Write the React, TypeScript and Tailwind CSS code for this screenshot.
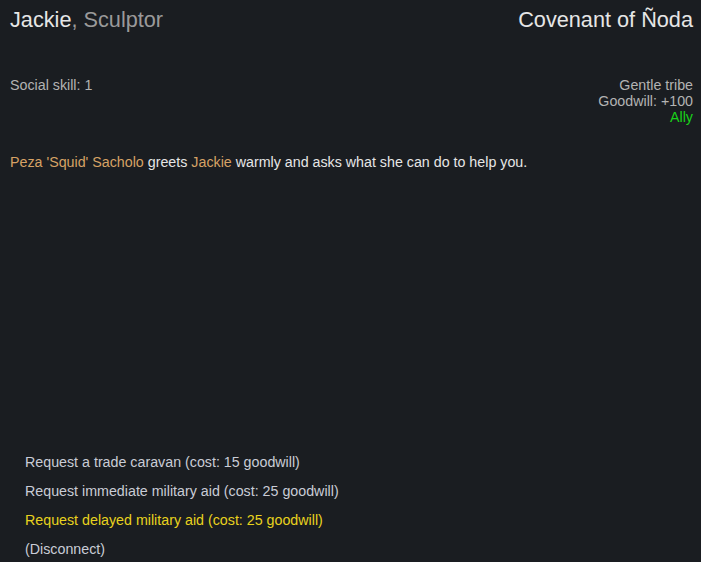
import React from "react";

export default function App() {
  const options = [
    { text: "Request a trade caravan (cost: 15 goodwill)", cls: "text-[#c9ccd6]" },
    { text: "Request immediate military aid (cost: 25 goodwill)", cls: "text-[#c9ccd6]" },
    { text: "Request delayed military aid (cost: 25 goodwill)", cls: "text-[#e8d21e]" },
    { text: "(Disconnect)", cls: "text-[#c9ccd6]" },
  ];
  return (
    <div
      className="w-[701px] h-[562px] overflow-hidden bg-[#1a1d21] pl-[10px] pr-[8px] flex flex-col"
      style={{ fontFamily: '"Liberation Sans", Arial, sans-serif' }}
    >
      <div className="flex justify-between items-center pt-[6px] h-[34px] text-[21.7px] leading-[28px]">
        <div>
          <span className="text-[#e6e6e6]">Jackie</span>
          <span className="text-[#9a9a9a]">, Sculptor</span>
        </div>
        <div className="text-[#e6e6e6]">Covenant of Ñoda</div>
      </div>
      <div className="flex justify-between mt-[43px] text-[14.25px] leading-[16px] text-[#b3b3b3]">
        <div>Social skill: 1</div>
        <div className="text-right">
          <div>Gentle tribe</div>
          <div>Goodwill: +100</div>
          <div className="text-[#19d119]">Ally</div>
        </div>
      </div>
      <div className="mt-[29px] text-[14.25px] leading-[16px] text-[#e6e6e6]">
        <span className="text-[#d6a265]">Peza 'Squid' Sacholo</span> greets{" "}
        <span className="text-[#d6a265]">Jackie</span> warmly and asks what she can do to help you.
      </div>
      <div className="mt-[278px] pl-[15px] flex flex-col text-[14.25px]">
        {options.map((o) => (
          <div key={o.text} className={`h-[29px] flex items-center ${o.cls}`}>
            {o.text}
          </div>
        ))}
      </div>
    </div>
  );
}
